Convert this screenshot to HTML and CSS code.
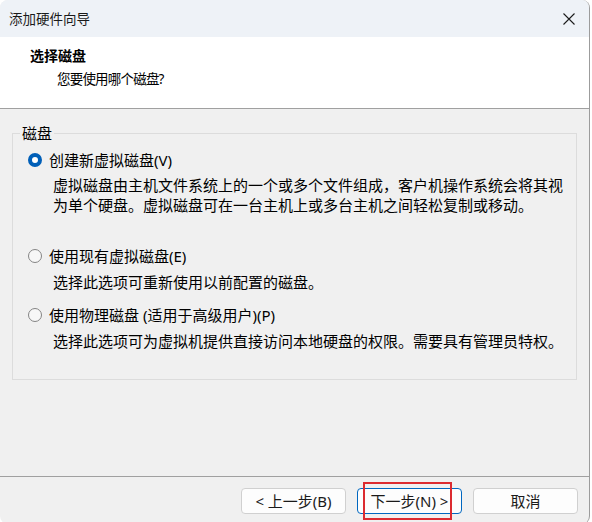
FILE: index.html
```html
<!DOCTYPE html>
<html lang="zh-CN">
<head>
<meta charset="utf-8">
<title>添加硬件向导</title>
<link rel="stylesheet" href="styles.css">
</head>
<body>
<div class="window">
  <div class="titlebar">
    <span class="title">添加硬件向导</span>
    <span class="close" aria-label="关闭">
      <svg width="12" height="12" viewBox="0 0 12 12"><path d="M0.5 0.5 L11.5 11.5 M11.5 0.5 L0.5 11.5" stroke="#1c1c1c" stroke-width="1.1" fill="none"/></svg>
    </span>
  </div>
  <div class="header">
    <div class="h-title">选择磁盘</div>
    <div class="h-sub">您要使用哪个磁盘?</div>
  </div>
  <div class="content">
    <fieldset class="group">
      <legend class="legend">磁盘</legend>
      <div class="option first">
        <div class="row"><span class="radio checked"></span><span class="label">创建新虚拟磁盘(V)</span></div>
        <div class="desc">虚拟磁盘由主机文件系统上的一个或多个文件组成，客户机操作系统会将其视<br>为单个硬盘。虚拟磁盘可在一台主机上或多台主机之间轻松复制或移动。</div>
      </div>
      <div class="option second">
        <div class="row"><span class="radio"></span><span class="label">使用现有虚拟磁盘(E)</span></div>
        <div class="desc">选择此选项可重新使用以前配置的磁盘。</div>
      </div>
      <div class="option third">
        <div class="row"><span class="radio"></span><span class="label">使用物理磁盘 (适用于高级用户)(P)</span></div>
        <div class="desc">选择此选项可为虚拟机提供直接访问本地硬盘的权限。需要具有管理员特权。</div>
      </div>
    </fieldset>
  </div>
  <div class="footer">
    <button class="btn">&lt; 上一步(B)</button>
    <button class="btn default">下一步(N) &gt;</button>
    <button class="btn">取消</button>
  </div>
  <div class="highlight"></div>
</div>
</body>
</html>
```

FILE: styles.css
```css
html, body {
  margin: 0;
  padding: 0;
  background: #ffffff;
  overflow: hidden;
}
body {
  font-family: "Noto Sans", "Noto Sans CJK SC", sans-serif;
  color: #1a1a1a;
}
.window {
  position: relative;
  width: 589px;
  height: 524px;
  border-right: 1px solid #9c9c9c;
  border-radius: 8px;
  overflow: hidden;
  background: #f0f0f0;
  display: flex;
  flex-direction: column;
}
.titlebar {
  height: 37px;
  flex: none;
  background: #eef2f7;
  display: flex;
  align-items: center;
  justify-content: space-between;
  padding: 0 14px 0 9px;
}
.title {
  font-size: 13.5px;
  letter-spacing: 0px;
  color: #1a1a1a;
  line-height: 20px;
  white-space: nowrap;
}
.close {
  display: flex;
  width: 12px;
  height: 12px;
}
.header {
  flex: none;
  background: #ffffff;
  border-bottom: 1px solid #a0a0a0;
  padding: 9px 0 0 30px;
  height: 62px;
}
.h-title {
  font-size: 14px;
  font-weight: bold;
  letter-spacing: 0;
  line-height: 20px;
  color: #000;
  white-space: nowrap;
}
.h-sub {
  font-size: 13.5px;
  line-height: 20px;
  margin-top: 3px;
  padding-left: 27px;
  letter-spacing: -0.8px;
  color: #000;
  white-space: nowrap;
}
.content {
  flex: 1;
  padding: 14px 12px 0 12px;
}
.group {
  margin: 0;
  border: 1px solid #dcdcdc;
  padding: 7px 15px 28px 15px;
  min-width: 0;
}
.legend {
  font-size: 15px;
  line-height: 20px;
  padding: 0 2px;
  margin-left: -8px;
  color: #000;
}
.row {
  display: flex;
  align-items: center;
  height: 20px;
}
.radio {
  width: 14px;
  height: 14px;
  box-sizing: border-box;
  border-radius: 50%;
  border: 1px solid #848484;
  background: #f7f7f7;
  margin-right: 7px;
  flex: none;
}
.radio.checked {
  border: 4px solid #005fb8;
  background: #ffffff;
}
.label {
  font-size: 15px;
  line-height: 20px;
  color: #000;
  white-space: nowrap;
}
.desc {
  font-size: 15px;
  line-height: 20px;
  padding-left: 25px;
  margin-top: 5px;
  color: #000;
  white-space: nowrap;
}
.option.second {
  margin-top: 31px;
}
.option.second .desc,
.option.third .desc {
  margin-top: 6px;
}
.option.third {
  margin-top: 13px;
}
.footer {
  flex: none;
  height: 48px;
  border-top: 1px solid #a0a0a0;
  box-sizing: border-box;
  display: flex;
  justify-content: flex-end;
  align-items: flex-start;
  gap: 11px;
  padding: 11px 11px 0 0;
}
.btn {
  width: 105px;
  height: 26px;
  box-sizing: border-box;
  background: #fdfdfd;
  border: 1px solid #d0d0d0;
  border-radius: 4px;
  font-family: "Noto Sans", "Noto Sans CJK SC", sans-serif;
  font-size: 15px;
  color: #1a1a1a;
  padding: 0;
  line-height: 22px;
}
.btn.default {
  border-color: #0067c0;
}
.highlight {
  position: absolute;
  left: 363px;
  top: 482px;
  width: 89px;
  height: 38px;
  box-sizing: border-box;
  border: 2px solid #dc2b30;
  pointer-events: none;
}
```
